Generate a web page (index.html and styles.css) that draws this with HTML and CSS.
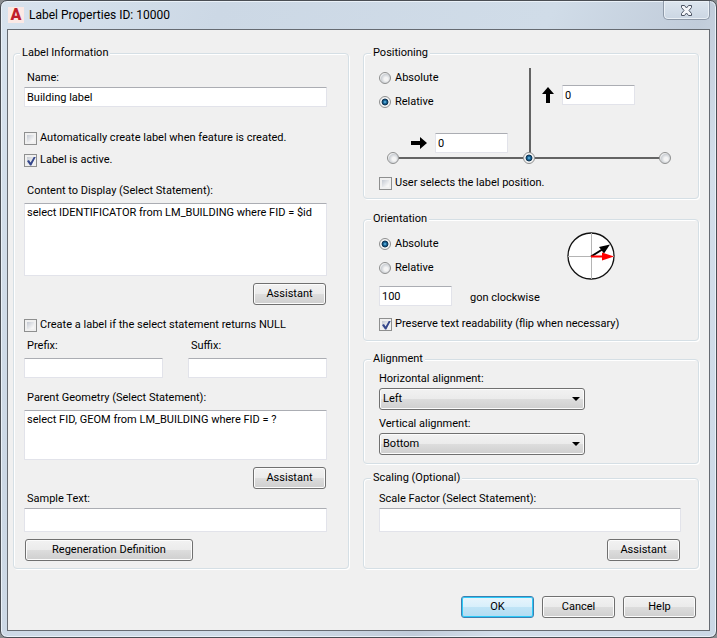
FILE: index.html
```html
<!DOCTYPE html>
<html lang="en">
  <head>
    <meta charset="UTF-8" />
    <meta name="viewport" content="width=device-width, initial-scale=1.0" />
    <title>Label Properties ID: 10000</title>
    <link rel="stylesheet" href="styles.css">
  </head>
  <body>
    <div class="window">
      <header class="title-bar">
        <span class="app-icon">A</span>
        <h1>Label Properties ID: 10000</h1>
        <button type="button" class="close-btn" aria-label="Close">
          <svg width="13" height="11" viewBox="0 0 13 11">
            <path d="M1.500.5h3l2 2.500 2-2.500h3v2L9 5.500l2.500 3v2h-3l-2-2.500-2 2.500h-3v-2l2.500-3-2.500-3z" fill="#f4f6fa" stroke="#4b5363" />
          </svg>
        </button>
      </header>

      <form class="dialog">
        <div class="columns">
          <!-- Left column -->
          <fieldset class="information">
            <legend>Label Information</legend>
            <label class="caption" for="name">Name:</label>
            <input type="text" id="name" value="Building label" />

            <div class="options">
              <label class="check"><input type="checkbox" /> Automatically create label when feature is created.</label>
              <label class="check"><input type="checkbox" checked /> Label is active.</label>
            </div>

            <label class="caption spaced" for="content">Content to Display (Select Statement):</label>
            <textarea id="content" class="content-box">select IDENTIFICATOR from LM_BUILDING where FID = $id</textarea>
            <button type="button" class="btn assistant">Assistant</button>

            <label class="check null-check"><input type="checkbox" /> Create a label if the select statement returns NULL</label>
            <div class="affixes">
              <div>
                <label class="caption spaced" for="prefix">Prefix:</label>
                <input type="text" id="prefix" />
              </div>
              <div>
                <label class="caption spaced" for="suffix">Suffix:</label>
                <input type="text" id="suffix" />
              </div>
            </div>

            <label class="caption spaced" for="parent">Parent Geometry (Select Statement):</label>
            <textarea id="parent" class="parent-box">select FID, GEOM from LM_BUILDING where FID = ?</textarea>
            <button type="button" class="btn assistant">Assistant</button>

            <label class="caption sample" for="sample">Sample Text:</label>
            <input type="text" id="sample" class="tall" />
            <button type="button" class="btn regeneration">Regeneration Definition</button>
          </fieldset>

          <!-- Right column -->
          <div class="side">
            <fieldset class="positioning">
              <legend>Positioning</legend>
              <div class="offsets">
                <div class="offset-left">
                  <div class="radios">
                    <label class="check"><input type="radio" name="position" /> Absolute</label>
                    <label class="check"><input type="radio" name="position" checked /> Relative</label>
                  </div>
                  <div class="offset-x">
                    <svg width="16" height="12" viewBox="0 0 16 12">
                      <path d="M0 4h9V0l7 6-7 6V8H0z" />
                    </svg>
                    <input type="text" class="short" value="0" aria-label="Horizontal offset" />
                  </div>
                </div>
                <div class="axis-y"></div>
                <div class="offset-y">
                  <svg width="12" height="16" viewBox="0 0 12 16">
                    <path d="M4 16V7H0l6-7 6 7H8v9z" />
                  </svg>
                  <input type="text" class="short" value="0" aria-label="Vertical offset" />
                </div>
              </div>
              <div class="axis-x">
                <input type="radio" name="anchor" aria-label="Start" />
                <span class="line"></span>
                <input type="radio" name="anchor" aria-label="Middle" checked />
                <span class="line"></span>
                <input type="radio" name="anchor" aria-label="End" />
              </div>
              <label class="check user-check"><input type="checkbox" /> User selects the label position.</label>
            </fieldset>

            <fieldset class="orientation">
              <legend>Orientation</legend>
              <div class="direction">
                <div class="radios">
                  <label class="check"><input type="radio" name="orientation" checked /> Absolute</label>
                  <label class="check"><input type="radio" name="orientation" /> Relative</label>
                </div>
                <svg class="compass" width="50" height="50" viewBox="0 0 50 50">
                  <circle cx="25" cy="25" r="23" fill="#fff" stroke="#111" stroke-width="1.300" />
                  <path d="M2 25.500h46M25.500 2v46" stroke="#b4b4b4" fill="none" />
                  <path d="M25 25.500L37 18" stroke="#000" stroke-width="2" />
                  <path d="M44 13.500L33 16l5 6.500z" />
                  <path d="M25 25.500h13" stroke="#f00" stroke-width="2" />
                  <path d="M48 25.500l-12-4v8z" fill="#f00" />
                </svg>
              </div>
              <div class="angle">
                <input type="text" id="angle" class="short" value="100" />
                <label for="angle">gon clockwise</label>
              </div>
              <label class="check readable"><input type="checkbox" checked /> Preserve text readability (flip when necessary)</label>
            </fieldset>

            <fieldset class="alignment">
              <legend>Alignment</legend>
              <label for="horizontal">Horizontal alignment:</label>
              <div class="select">
                <select id="horizontal">
                  <option>Left</option>
                  <option>Center</option>
                  <option>Right</option>
                </select>
              </div>
              <label class="vertical" for="vertical">Vertical alignment:</label>
              <div class="select">
                <select id="vertical">
                  <option>Bottom</option>
                  <option>Middle</option>
                  <option>Top</option>
                </select>
              </div>
            </fieldset>

            <fieldset class="scaling">
              <legend>Scaling (Optional)</legend>
              <label for="scale">Scale Factor (Select Statement):</label>
              <input type="text" id="scale" class="tall" />
              <button type="button" class="btn assistant">Assistant</button>
            </fieldset>
          </div>
        </div>

        <footer>
          <button type="button" class="btn ok">OK</button>
          <button type="button" class="btn">Cancel</button>
          <button type="button" class="btn">Help</button>
        </footer>
      </form>
    </div>
  </body>
</html>
```

FILE: styles.css
```css
* {
  box-sizing: border-box;
}

body {
  margin: 0;
  background-color: #8a8d90;
  color: #000;
  font-family: Roboto, sans-serif;
  font-size: 11px;
  line-height: 16px;
}

button,
input,
select,
textarea {
  margin: 0;
  color: inherit;
  font: inherit;
}

svg {
  display: block;
}

/* Window frame */
.window {
  display: flex;
  flex-direction: column;
  min-height: 100vh;
  padding: 0 6px 6px;
  border: 1px solid #4a4e54;
  border-radius: 7px;
  background: linear-gradient(115deg, #d8e3ee 0%, #ccd8e5 22%, #d0dce8 55%, #c1ccda 70%, #d3deea 78%, #cbd8e6 100%);
  box-shadow: inset 0 0 0 1px #eaf1f8;
}

.title-bar {
  display: flex;
  align-items: center;
  height: 28px;
}

.app-icon {
  width: 16px;
  height: 16px;
  margin-left: 1px;
  background-color: #fbe9e5;
  color: #c0202b;
  font: 900 16px/16px Roboto, sans-serif;
  text-align: center;
}

h1 {
  flex: 1;
  margin: 0 0 0 5px;
  font: 12px/16px Roboto, sans-serif;
}

.close-btn {
  display: flex;
  align-items: center;
  justify-content: center;
  align-self: flex-start;
  width: 47px;
  height: 19px;
  padding: 0;
  border: 1px solid #8e99a8;
  border-top: none;
  border-radius: 0 0 5px 5px;
  background: linear-gradient(#dce5ee, #cbd6e3);
  box-shadow: inset 0 0 0 1px #eaf0f6;
}

.dialog {
  display: flex;
  flex: 1;
  flex-direction: column;
  padding: 15px 10px 12px 5px;
  border: 1px solid #666b72;
  background-color: #f0f0f0;
}

.columns {
  display: grid;
  grid-template-columns: 1fr 1fr;
  gap: 14px;
}

.side {
  display: flex;
  flex-direction: column;
}

/* Group boxes */
fieldset {
  min-width: 0;
  margin: 0;
  padding: 9px 17px 7px 15px;
  border: 1px solid #d5dfe5;
  border-radius: 4px;
  box-shadow: inset 1px 1px 0 #fff, 1px 1px 0 #fff;
}

legend {
  margin-left: -8px;
  padding: 0 2px;
  background-color: #f0f0f0;
}

fieldset label {
  display: block;
}

.information {
  padding-right: 21px;
  padding-left: 10px;
}

.information legend {
  margin-left: -4px;
}

.caption {
  padding-left: 3px;
}

.spaced {
  margin: 12px 0 4px;
}

/* Fields */
input[type="text"],
textarea {
  display: block;
  width: 100%;
  height: 20px;
  margin-top: 1px;
  padding: 0 2px;
  border: 1px solid #e2e3ea;
  border-top-color: #abadb3;
  border-radius: 1px;
  background-color: #fff;
}

input.short {
  width: 73px;
  margin: 0;
}

input.tall {
  height: 24px;
}

textarea {
  padding: 1px 2px;
  overflow: hidden;
  resize: none;
}

textarea.content-box {
  height: 73px;
}

textarea.parent-box {
  height: 50px;
}

/* Check boxes and radio buttons */
.check {
  display: flex;
  align-items: center;
  gap: 3px;
  width: fit-content;
}

input[type="checkbox"] {
  appearance: none;
  display: grid;
  place-items: center;
  width: 13px;
  height: 13px;
  border: 1px solid #8e8f8f;
  background: linear-gradient(135deg, #c4c9d2, #f6f6f6 80%) content-box #f4f4f4;
  padding: 2px;
}

input[type="checkbox"]:checked::before {
  content: "";
  width: 9px;
  height: 9px;
  background-color: #36488c;
  clip-path: polygon(0 50%, 22% 38%, 40% 66%, 78% 0, 100% 0, 48% 100%, 34% 100%);
}

input[type="radio"] {
  appearance: none;
  width: 12px;
  height: 12px;
  border: 1px solid #8e8f8f;
  border-radius: 50%;
  background: radial-gradient(circle at 60% 60%, #f4f4f4 20%, #cdd1d6 55%, #f4f4f4 70%);
}

input[type="radio"]:checked {
  background: radial-gradient(circle at 50% 50%, #7fd0f0 0, #1c6ea4 20%, #0e3250 42%, #f4f4f4 54%);
}

.radios {
  display: flex;
  flex-direction: column;
  gap: 8px;
}

.radios .check {
  gap: 4px;
}

/* Buttons */
.btn {
  display: block;
  width: 73px;
  height: 22px;
  padding: 0;
  border: 1px solid #707070;
  border-radius: 3px;
  background: linear-gradient(#f2f2f2 0, #ebebeb 50%, #dddddd 50%, #cfcfcf 100%);
  box-shadow: inset 0 0 0 1px #fcfcfc;
}

.assistant {
  margin: 7px 1px 0 auto;
}

.regeneration {
  width: 168px;
  margin: 7px 0 0 1px;
}

.ok {
  border-color: #3c7fb1;
  background: linear-gradient(#e8f5fc 0, #d8effb 50%, #c0e4f6 50%, #b2dcf2 100%);
  box-shadow: inset 0 0 0 1px #2ccaf8;
}

/* Label information */
.options {
  display: flex;
  flex-direction: column;
  gap: 6px;
  margin: 23px 0 15px;
}

.null-check {
  margin-top: 12px;
}

.affixes {
  display: grid;
  grid-template-columns: 1fr 1fr;
  gap: 25px;
  margin-top: -7px;
}

.sample {
  margin-top: 2px;
}

/* Positioning */
.positioning {
  padding-top: 7px;
}

.offsets {
  display: grid;
  grid-template-columns: 1fr 2px 1fr;
}

.offset-left {
  padding-top: 2px;
}

.offset-x,
.offset-y {
  display: flex;
  gap: 8px;
}

.offset-x {
  align-items: center;
  justify-content: flex-end;
  margin: 23px 21px 0 0;
}

.offset-y {
  align-items: center;
  align-self: start;
  margin: 17px 0 0 11px;
}

.axis-y {
  background-color: #646464;
}

.axis-x {
  display: flex;
  align-items: center;
  margin: -1px 10px 0 8px;
}

.line {
  flex: 1;
  height: 2px;
  background-color: #646464;
}

.user-check {
  margin-top: 11px;
}

/* Orientation */
.orientation {
  margin-top: 12px;
  padding-top: 4px;
  padding-bottom: 8px;
}

.direction {
  display: flex;
  justify-content: space-between;
}

.direction .radios {
  padding-top: 5px;
}

.compass {
  margin-right: 65px;
}

.angle {
  display: flex;
  gap: 18px;
  margin-top: 5px;
}

.angle label {
  padding-top: 4px;
}

.readable {
  margin-top: 10px;
}

/* Alignment */
.alignment {
  margin-top: 10px;
  padding-top: 4px;
  padding-bottom: 8px;
}

.vertical {
  margin-top: 6px;
}

.select {
  position: relative;
  max-width: 206px;
  margin-top: 1px;
}

.select::after {
  content: "";
  position: absolute;
  top: 9px;
  right: 5px;
  border: 4px solid transparent;
  border-top-color: #000;
  border-bottom: none;
  pointer-events: none;
}

select {
  appearance: none;
  display: block;
  width: 100%;
  height: 22px;
  padding: 0 3px;
  border: 1px solid #707070;
  border-radius: 3px;
  background: linear-gradient(#f2f2f2 0, #ebebeb 50%, #dddddd 50%, #cfcfcf 100%);
  box-shadow: inset 0 0 0 1px #fcfcfc;
}

/* Scaling */
.scaling {
  margin-top: 6px;
  padding-top: 5px;
}

footer {
  display: flex;
  justify-content: flex-end;
  gap: 8px;
  margin-top: auto;
  padding-right: 3px;
}
```
